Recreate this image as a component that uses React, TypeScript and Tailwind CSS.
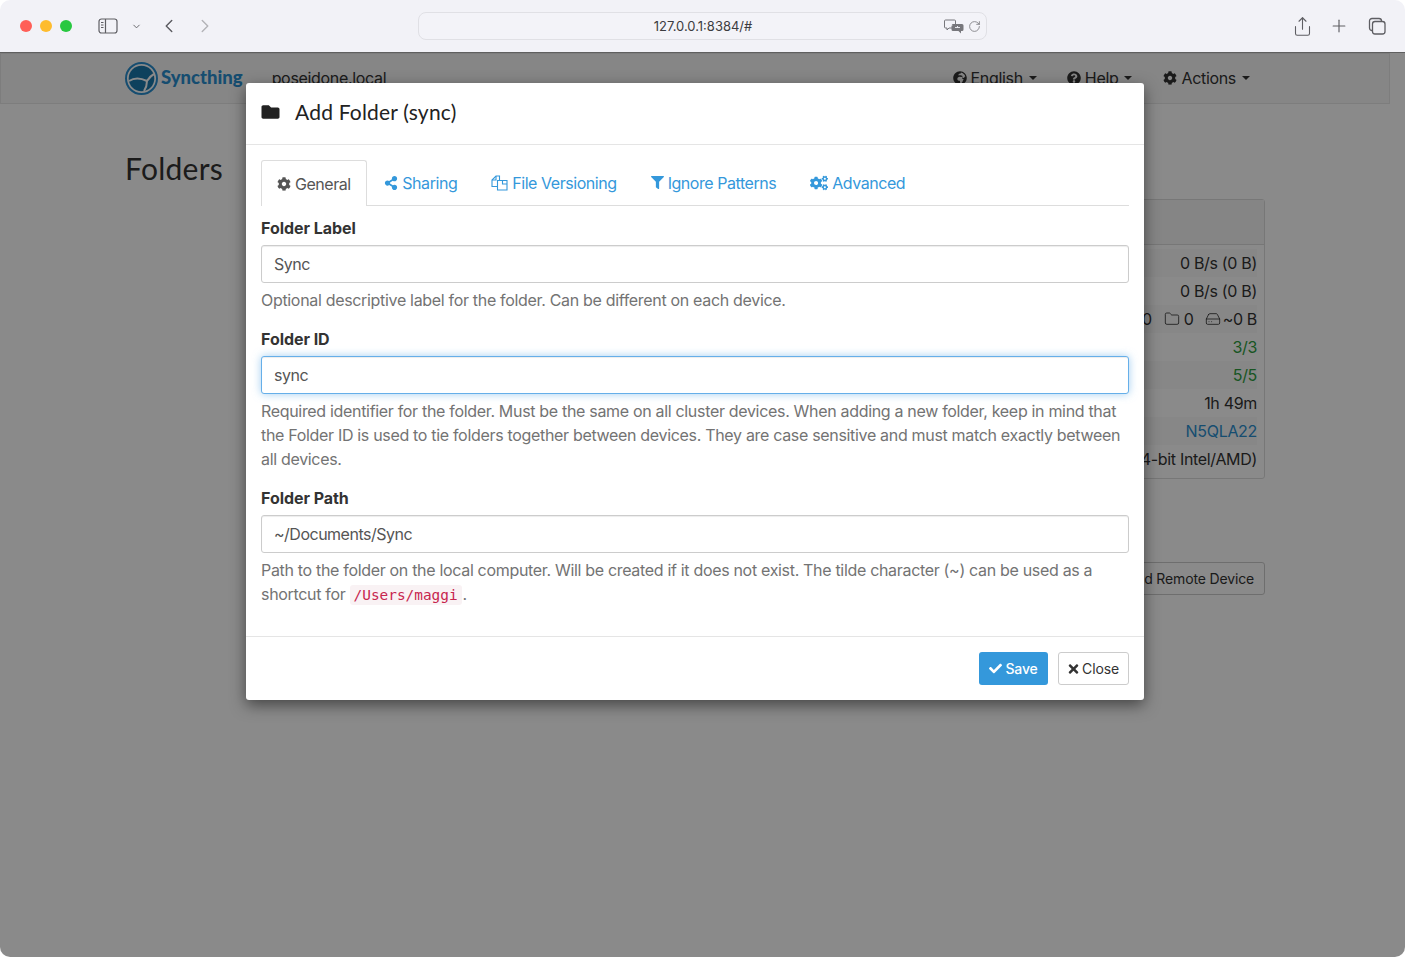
import { ChevronDown, ChevronLeft, ChevronRight, HardDrive, Folder, Plus, RotateCw, Share } from "lucide-react";
import { FaCheck, FaCog, FaCogs, FaFilter, FaFolder, FaGlobeAfrica, FaQuestionCircle, FaShareAlt, FaTimes } from "react-icons/fa";
import type { ReactNode } from "react";

const stats: { value: ReactNode; className?: string }[] = [
  { value: "0 B/s (0 B)" },
  { value: "0 B/s (0 B)" },
  {
    value: (
      <span className="inline-flex items-center">
        0
        <Folder aria-hidden="true" className="ml-[12px] mr-[4px] h-4 w-4" strokeWidth={1.25} />
        0
        <HardDrive aria-hidden="true" className="ml-[11px] mr-[2px] h-4 w-4" strokeWidth={1.25} />
        ~0 B
      </span>
    ),
  },
  { value: "3/3", className: "text-[#2e9e3f]" },
  { value: "5/5", className: "text-[#2e9e3f]" },
  { value: "1h 49m" },
  { value: "N5QLA22", className: "text-[#2a8fd0]" },
  { value: "64-bit Intel/AMD)" },
];

function FilesIcon() {
  return (
    <svg aria-hidden="true" width="17" height="16" viewBox="0 0 17 16" fill="none" stroke="currentColor" strokeWidth="1.1">
      <path d="M8.500 5.500v-4.500h-3.500l-4 4v6.500h5" />
      <path d="M5 1v4h-4" />
      <path d="M6.500 5.500h5l4.500 0v9.500h-9.500z" />
      <path d="M11.500 5.500v3.500h4.500" />
    </svg>
  );
}

const tabs = [
  { label: "Sharing", icon: <FaShareAlt aria-hidden="true" className="h-[14px] w-[14px]" /> },
  { label: "File Versioning", icon: <FilesIcon /> },
  { label: "Ignore Patterns", icon: <FaFilter aria-hidden="true" className="h-[13px] w-[13px]" /> },
  { label: "Advanced", icon: <FaCogs aria-hidden="true" className="h-[16px] w-[18px]" /> },
];

function BrowserBar() {
  return (
    <div className="relative z-30 flex h-[53px] shrink-0 items-center border-b border-[#5f5f5f] bg-[#f2f2f7] text-[#5e5e63]">
      <div className="ml-5 flex gap-2">
        <span className="h-3 w-3 rounded-full bg-[#ff5f57]" />
        <span className="h-3 w-3 rounded-full bg-[#febc2e]" />
        <span className="h-3 w-3 rounded-full bg-[#28c840]" />
      </div>
      <svg aria-hidden="true" className="ml-[26px]" width="20" height="16" viewBox="0 0 20 16" fill="none" stroke="currentColor" strokeWidth="1.2">
        <rect x="1" y="1" width="18" height="14" rx="2.500" />
        <path d="M7.500 1v14" />
        <path d="M3 4.500h2.500M3 7h2.500M3 9.500h2.500" />
      </svg>
      <ChevronDown aria-hidden="true" className="ml-[13px] h-[11px] w-[11px]" strokeWidth={2} />
      <ChevronLeft aria-hidden="true" className="ml-[16px] h-[22px] w-[22px]" strokeWidth={1.6} />
      <ChevronRight aria-hidden="true" className="ml-[14px] h-[22px] w-[22px] text-[#b4b4b8]" strokeWidth={1.6} />
      <div className="ml-[202px] flex h-7 w-[569px] items-center rounded-lg border border-[#e0e0e5] bg-[#f3f3f8] pr-[5px] text-[13px] text-[#3c3c40]">
        <span className="flex-1 pl-[43px] pt-[1px] text-center">127.0.0.1:8384/#</span>
        <svg aria-hidden="true" width="20" height="15" viewBox="0 0 20 15" className="mr-[4px]">
          <path d="M1.500 1h9a1 1 0 0 1 1 1v6a1 1 0 0 1-1 1H5l-2 2V9H1.500a1 1 0 0 1-1-1V2a1 1 0 0 1 1-1z" fill="none" stroke="#77777c" strokeWidth="1" />
          <path d="M9 5h9a1.500 1.500 0 0 1 1.500 1.500v4A1.500 1.500 0 0 1 18 12h-1v2.500L14.500 12H9a1.500 1.500 0 0 1-1.500-1.500v-4A1.500 1.500 0 0 1 9 5z" fill="#77777c" />
          <path d="M4 7l2-4.500L8 7M11 8.500h5M13.500 7v1.500" fill="none" stroke="#f2f2f7" strokeWidth="0.9" />
        </svg>
        <RotateCw aria-hidden="true" className="h-[13px] w-[13px] text-[#77777c]" strokeWidth={1.5} />
      </div>
      <Share aria-hidden="true" className="ml-[305px] h-[21px] w-[21px]" strokeWidth={1.25} />
      <Plus aria-hidden="true" className="ml-[16px] h-[20px] w-[20px]" strokeWidth={1.4} />
      <svg aria-hidden="true" className="ml-[19px]" width="18" height="18" viewBox="0 0 18 18" fill="none" stroke="currentColor" strokeWidth="1.3">
        <rect x="4.500" y="4.500" width="12.500" height="12.500" rx="2.500" />
        <path d="M4.500 13.500h-.5A2.500 2.500 0 0 1 1.500 11V4A2.500 2.500 0 0 1 4 1.500h7A2.500 2.500 0 0 1 13.500 4v.5" />
      </svg>
    </div>
  );
}

function Logo() {
  return (
    <svg aria-hidden="true" width="33" height="33" viewBox="0 0 33 33">
      <circle cx="16.500" cy="16.500" r="15.500" fill="#fff" stroke="#2a8fd0" strokeWidth="2" />
      <circle cx="16.500" cy="16.500" r="12.800" fill="#1a78ad" />
      <path d="M4 19C10 15 16 16 22 19M22 19C24 16 27 13 29 12M22 19C22 23 21 26 19 29" fill="none" stroke="#fff" strokeWidth="2" />
    </svg>
  );
}

function BackgroundPage() {
  return (
    <div className="flex-1 bg-white text-[#333] tracking-[-0.32px]">
      <div className="mr-[15px] flex h-[51px] items-center border border-[#e7e7e7] bg-[#f8f8f8] pl-[124px] pb-[1px]">
        <Logo />
        <span className="ml-[3px] font-['Lato',sans-serif] text-[18.5px] font-black tracking-[0px] text-[#2a8fd0]">Syncthing</span>
        <span className="ml-[29px] text-[16px]">poseidone.local</span>
        <div className="ml-auto mr-[139px] flex items-center text-[16px]">
          <FaGlobeAfrica aria-hidden="true" className="mr-1 h-[14px] w-[14px]" />
          English
          <span className="ml-[6px] mr-[30px] border-x-4 border-t-4 border-x-transparent border-t-current" />
          <FaQuestionCircle aria-hidden="true" className="mr-1 h-[14px] w-[14px]" />
          Help
          <span className="ml-[6px] mr-[31px] border-x-4 border-t-4 border-x-transparent border-t-current" />
          <FaCog aria-hidden="true" className="mr-1 h-[14px] w-[14px]" />
          Actions
          <span className="ml-[6px] border-x-4 border-t-4 border-x-transparent border-t-current" />
        </div>
      </div>

      <div className="mx-[125px] mt-[44px] w-[1140px]">
        <h1 className="font-['Lato',sans-serif] text-[30px] leading-[40px] tracking-[0.25px]">Folders</h1>
        <div className="ml-auto mt-[11px] w-[560px] rounded-[3px] border border-[#ddd]">
          <div className="h-[45px] border-b border-[#ddd] bg-[#f5f5f5]" />
          <div className="p-[4px_7px_5px_4px]">
            {stats.map((row, index) => (
              <div
                key={index}
                className={`h-7 text-right text-[16px] leading-7 ${index % 2 === 0 ? "bg-[#f9f9f9]" : ""} ${row.className ?? ""}`}
              >
                {row.value}
              </div>
            ))}
          </div>
        </div>
        <div className="mt-[83px] flex justify-end">
          <span className="flex h-[33px] items-center rounded-[3px] border border-[#ccc] px-[10px] text-[14px] tracking-[-0.15px]">Add Remote Device</span>
        </div>
      </div>
    </div>
  );
}

function Field({ label, value, focused, children }: { label: string; value: string; focused?: boolean; children: ReactNode }) {
  return (
    <div className="mb-[15px]">
      <label className="mb-[5px] block text-[16px] font-bold leading-6 tracking-[-0.05px] text-[#333]">{label}</label>
      <div
        className={`flex h-[38px] items-center rounded-[3px] border bg-white px-3 text-[16px] tracking-[-0.5px] text-[#555] ${
          focused ? "border-[#66afe9] shadow-[inset_0_1px_1px_rgba(0,0,0,0.075),0_0_8px_rgba(102,175,233,0.6)]" : "border-[#ccc] shadow-[inset_0_1px_1px_rgba(0,0,0,0.075)]"
        }`}
      >
        {value}
      </div>
      <p className="mt-[5px] text-[16px] leading-6 text-[#737373]">{children}</p>
    </div>
  );
}

function FolderModal() {
  return (
    <div className="absolute left-[246px] top-[83px] z-20 w-[898px] rounded-[3px] bg-white tracking-[-0.32px] text-[#333] shadow-[0_5px_15px_rgba(0,0,0,0.5)]">
      <div className="flex h-[62px] items-center border-b border-[#e5e5e5] px-[15px] pb-[3px]">
        <FaFolder aria-hidden="true" className="h-[18px] w-[19px] text-[#222]" />
        <h4 className="ml-[15px] font-['Lato',sans-serif] text-[21px] tracking-[0.2px] text-[#222]">Add Folder (sync)</h4>
      </div>

      <div className="px-[15px] pt-[15px]">
        <div className="flex h-[46px] gap-[1px] border-b border-[#ddd] tracking-[-0.45px]">
          <div className="flex h-[46px] items-center gap-1 rounded-t-[3px] border border-b-0 border-[#ddd] bg-white px-[15px] text-[16px] text-[#555]">
            <FaCog aria-hidden="true" className="h-[14px] w-[14px]" />
            General
          </div>
          {tabs.map((tab) => (
            <div key={tab.label} className="flex items-center gap-1 px-[16.500px] text-[16px] text-[#3498db]">
              {tab.icon}
              {tab.label}
            </div>
          ))}
        </div>

        <div className="mt-[10px]">
          <Field label="Folder Label" value="Sync">
            Optional descriptive label for the folder. Can be different on each device.
          </Field>
          <Field label="Folder ID" value="sync" focused>
            Required identifier for the folder. Must be the same on all cluster devices. When adding a new folder, keep in mind that the Folder ID is used to tie folders together between devices. They are case sensitive and must match exactly between all devices.
          </Field>
          <Field label="Folder Path" value="~/Documents/Sync">
            Path to the folder on the local computer. Will be created if it does not exist. The tilde character (~) can be used as a shortcut for{" "}
            <code className="rounded-[3px] bg-[#f9f2f4] px-1 py-[2px] font-['DejaVu_Sans_Mono',monospace] text-[14.4px] tracking-normal text-[#c7254e]">/Users/maggi</code>
            <span className="ml-[1px]">.</span>
          </Field>
        </div>
      </div>

      <div className="mt-[29px] flex h-[64px] items-center justify-end gap-[10px] border-t border-[#e5e5e5] px-[15px] tracking-[-0.15px]">
        <button type="button" className="flex h-[33px] w-[69px] items-center justify-center gap-[3px] rounded-[3px] bg-[#3498db] text-[14px] font-medium text-white">
          <FaCheck aria-hidden="true" className="h-[13px] w-[13px]" />
          Save
        </button>
        <button type="button" className="flex h-[33px] w-[71px] items-center justify-center gap-[3px] rounded-[3px] border border-[#ccc] bg-white text-[14px] text-[#333]">
          <FaTimes aria-hidden="true" className="h-[14px] w-[11px]" />
          Close
        </button>
      </div>
    </div>
  );
}

export default function App() {
  return (
    <div className="h-[957px] w-[1405px] overflow-hidden bg-white font-['Inter',sans-serif]">
      <div className="relative flex h-full flex-col overflow-hidden rounded-[10px]">
        <BrowserBar />
        <BackgroundPage />
        <div className="absolute inset-x-0 bottom-0 top-[53px] z-10 bg-black/[0.46]" />
        <FolderModal />
      </div>
    </div>
  );
}
